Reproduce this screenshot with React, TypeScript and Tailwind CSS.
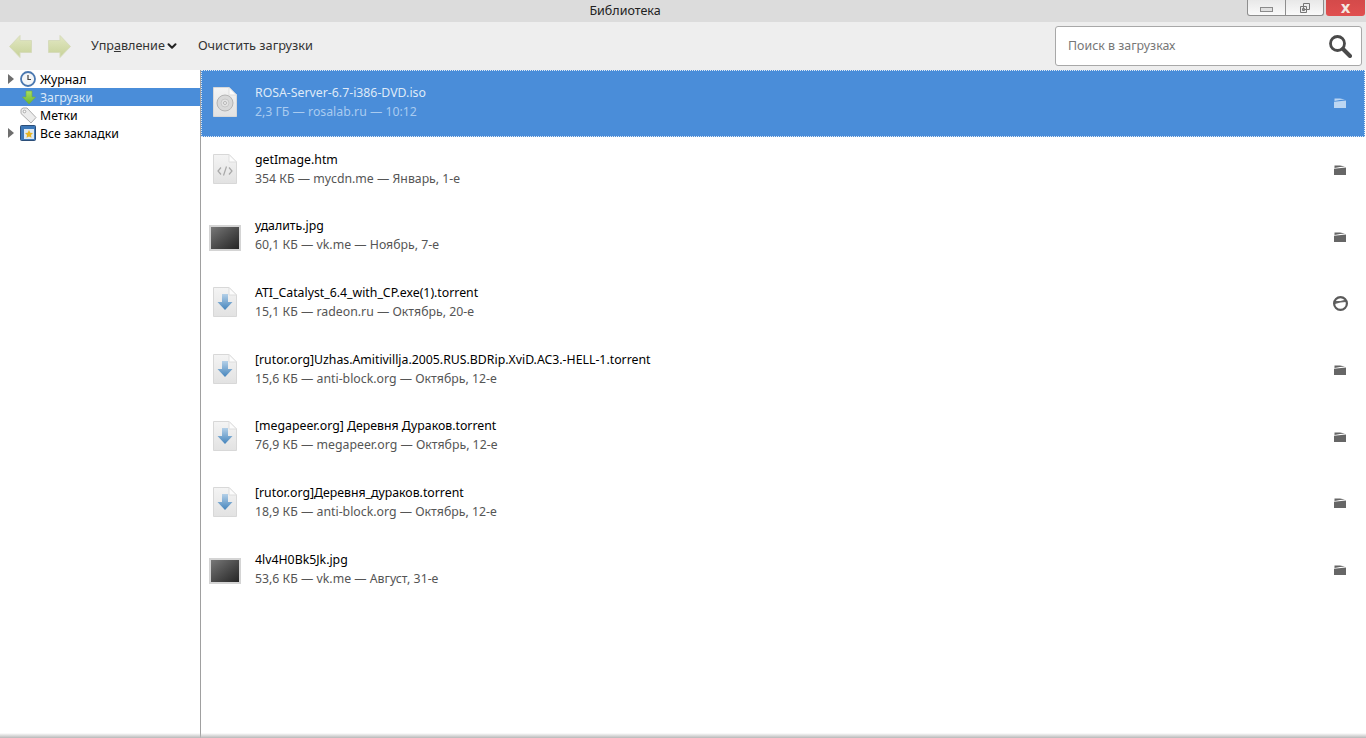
import { ChevronDown } from "lucide-react";

type Kind = "iso" | "html" | "image" | "torrent";

const downloads: { name: string; meta: string; kind: Kind; active?: boolean; round?: boolean }[] = [
  { name: "ROSA-Server-6.7-i386-DVD.iso", meta: "2,3 ГБ — rosalab.ru — 10:12", kind: "iso", active: true },
  { name: "getImage.htm", meta: "354 КБ — mycdn.me — Январь, 1-е", kind: "html" },
  { name: "удалить.jpg", meta: "60,1 КБ — vk.me — Ноябрь, 7-е", kind: "image" },
  { name: "ATI_Catalyst_6.4_with_CP.exe(1).torrent", meta: "15,1 КБ — radeon.ru — Октябрь, 20-е", kind: "torrent", round: true },
  { name: "[rutor.org]Uzhas.Amitivillja.2005.RUS.BDRip.XviD.AC3.-HELL-1.torrent", meta: "15,6 КБ — anti-block.org — Октябрь, 12-е", kind: "torrent" },
  { name: "[megapeer.org] Деревня Дураков.torrent", meta: "76,9 КБ — megapeer.org — Октябрь, 12-е", kind: "torrent" },
  { name: "[rutor.org]Деревня_дураков.torrent", meta: "18,9 КБ — anti-block.org — Октябрь, 12-е", kind: "torrent" },
  { name: "4lv4H0Bk5Jk.jpg", meta: "53,6 КБ — vk.me — Август, 31-е", kind: "image" },
];

function FileIcon({ kind }: { kind: Kind }) {
  if (kind === "image") {
    return (
      <div className="w-8 h-[26px] mt-[2px] border-2 border-[#d4d4d4] bg-gradient-to-br from-[#787878] to-[#262626]" />
    );
  }
  return (
    <svg width="24" height="30" viewBox="0 0 24 30" className="-mt-[2px]">
      <defs>
        <linearGradient id="page" x1="0" y1="0" x2="0" y2="1">
          <stop offset="0" stopColor="#f4f4f4" />
          <stop offset="1" stopColor="#e2e2e2" />
        </linearGradient>
        <linearGradient id="down" x1="0" y1="0" x2="0" y2="1">
          <stop offset="0" stopColor="#b4d0e8" />
          <stop offset="1" stopColor="#4484bc" />
        </linearGradient>
      </defs>
      <path d="M.5 .5H16L23.500 8V29.500H.5Z" fill="url(#page)" stroke="#d8d8d8" />
      <path d="M16 .5V8H23.500Z" fill="#fcfcfc" stroke="#dedede" />
      {kind === "iso" && (
        <g fill="none" stroke="#b4b4b4">
          <circle cx="12" cy="16" r="8" fill="#d8d8d8" />
          <circle cx="12" cy="16" r="4" fill="#e2e2e2" stroke="#c8c8c8" />
          <circle cx="12" cy="16" r="1.500" fill="#f4f4f4" />
        </g>
      )}
      {kind === "html" && (
        <g fill="none" stroke="#a8a8a8" strokeWidth="1.200">
          <path d="M8 13.500 5 17l3 3.500M16 13.500l3 3.500-3 3.500M13.500 12.500 10.500 21.500" />
        </g>
      )}
      {kind === "torrent" && <path d="M9 7h6v8h4.500L12 23 4.500 15H9Z" fill="url(#down)" />}
    </svg>
  );
}

function FolderIcon({ active }: { active?: boolean }) {
  const fill = active ? "#bcd6f2" : "#666666";
  return (
    <svg width="12" height="10" viewBox="0 0 12 10">
      <path d="M.5 .5H6L11 1.500 6 2 .5 3Z" fill={fill} />
      <path d="M0 3.800 12 2.500V10H0Z" fill={fill} />
    </svg>
  );
}

function RoundFolderIcon() {
  return (
    <svg width="15" height="15" viewBox="0 0 15 15">
      <circle cx="7.500" cy="7.500" r="6.400" fill="#fff" />
      <path d="M2 5 7.500 5 13 3.500V6L7.500 6.500 2 8Z" fill="#666" />
      <circle cx="7.500" cy="7.500" r="6.400" fill="none" stroke="#5a5a5a" strokeWidth="2.200" />
    </svg>
  );
}

function Arrow({ flip }: { flip?: boolean }) {
  return (
    <svg width="23" height="23" viewBox="0 0 23 23" className={flip ? "-scale-x-100" : ""}>
      <defs>
        <linearGradient id="arrowFill" x1="0" y1="0" x2="0" y2="1">
          <stop offset="0" stopColor="#e3e8c4" />
          <stop offset="1" stopColor="#c6d197" />
        </linearGradient>
      </defs>
      <path d="M11 .5 .5 11.500 11 22.500V17.500H22.500V5.500H11Z" fill="url(#arrowFill)" stroke="#d6dbbc" />
    </svg>
  );
}

function Triangle() {
  return (
    <svg width="6" height="10" viewBox="0 0 6 10">
      <path d="M0 0 6 5 0 10Z" fill="#6e6e6e" />
    </svg>
  );
}

function SidebarRow({ label, icon, arrow, active }: { label: string; icon: React.ReactNode; arrow?: boolean; active?: boolean }) {
  return (
    <div className={`h-[18px] flex items-center pl-[8px] ${active ? "bg-[#4a8dd9] text-[#d9e8f8]" : "text-black"}`}>
      <div className="w-[12px] shrink-0">{arrow && <Triangle />}</div>
      <div className="w-[20px] shrink-0 flex items-center">{icon}</div>
      <span className="mt-[2px]">{label}</span>
    </div>
  );
}

function App() {
  return (
    <div className="relative w-[1366px] h-[738px] overflow-hidden bg-white text-[12.300px] font-['Noto_Sans',sans-serif] flex flex-col">
      <div className="h-[22px] bg-[#dcdcdc] flex items-center justify-center relative shrink-0 pr-[116px]">
        <span className="text-[#222] text-[12.500px]">Библиотека</span>
        <div className="absolute top-0 left-[1247px] flex h-[16px]">
          <div className="w-[39px] border border-t-0 border-[#8e8e8e] rounded-bl-[3px] bg-gradient-to-b from-[#e8e8e8] to-[#fafafa] flex items-center justify-center">
            <div className="w-[13px] h-[5px] border border-[#8a8a8a] bg-[#e0e0e0] mt-[4px]" />
          </div>
          <div className="w-[38px] border border-t-0 border-l-0 border-[#8e8e8e] rounded-br-[3px] bg-gradient-to-b from-[#e8e8e8] to-[#fafafa] flex items-center justify-center">
            <svg width="10" height="10" viewBox="0 0 10 10" fill="none" stroke="#777">
              <path d="M3.500 .5h6v6h-6zM.5 3.500h6v6h-6z" fill="#eee" />
              <path d="M2.500 5.500h2v2h-2z" />
            </svg>
          </div>
          <div className="ml-[2px] w-[39px] rounded-b-[3px] bg-gradient-to-b from-[#d44a4a] to-[#e05050] flex items-center justify-center text-[#f4e8e0] font-bold text-[15px] leading-[16px]">
            <span className="font-['DejaVu_Sans',sans-serif]">x</span>
          </div>
        </div>
      </div>

      <div className="h-[48px] bg-[#eeeeee] flex items-center shrink-0 text-[#333] text-[12.600px]">
        <div className="ml-[9px] flex items-center gap-[16px]">
          <Arrow />
          <Arrow flip />
        </div>
        <div className="ml-[20px] flex items-center">
          <span>
            Упр<span className="underline">а</span>вление
          </span>
          <ChevronDown size={14} strokeWidth={3.500} className="text-[#222]" />
        </div>
        <span className="ml-[19px] text-[12.750px]">Очистить загрузки</span>
        <div className="ml-auto mr-[4px] w-[307px] h-[40px] border border-[#a8a8a8] rounded-[3px] bg-white flex items-center pl-[12px] pr-[9px] justify-between text-[#777] text-[12.400px]">
          <span>Поиск в загрузках</span>
          <svg width="24" height="24" viewBox="0 0 24 24" fill="none">
            <circle cx="9.500" cy="9.500" r="7" stroke="#4a4a4a" strokeWidth="2.800" />
            <path d="M15 15l7 7" stroke="#4a4a4a" strokeWidth="4" strokeLinecap="round" />
          </svg>
        </div>
      </div>

      <div className="flex flex-1 min-h-0">
        <div className="w-[201px] shrink-0 border-r border-[#a0a0a0]">
          <SidebarRow
            label="Журнал"
            arrow
            icon={
              <svg width="16" height="16" viewBox="0 0 16 16">
                <circle cx="8" cy="8" r="7" fill="#f4f6f8" stroke="#4a78b0" strokeWidth="1.800" />
                <path d="M8 4v4.500h3" fill="none" stroke="#444" strokeWidth="1.200" />
              </svg>
            }
          />
          <SidebarRow
            label="Загрузки"
            active
            icon={
              <svg width="14" height="15" viewBox="0 0 14 15" className="ml-[2px]">
                <defs>
                  <linearGradient id="greenDown" x1="0" y1="0" x2="0" y2="1">
                    <stop offset="0" stopColor="#a8de60" />
                    <stop offset="1" stopColor="#6cb634" />
                  </linearGradient>
                </defs>
                <path d="M4 1h6v6h3.500L7 14 .5 7H4Z" fill="url(#greenDown)" stroke="#72ad3c" strokeWidth=".6" />
              </svg>
            }
          />
          <SidebarRow
            label="Метки"
            icon={
              <svg width="17" height="17" viewBox="0 0 17 17">
                <path d="M1 2.500 3 1h4l9 9.500-5 5.500L1 6.500Z" fill="#ececec" stroke="#adadad" />
                <circle cx="4.500" cy="4.500" r="1.300" fill="#fff" stroke="#999" strokeWidth=".8" />
              </svg>
            }
          />
          <SidebarRow
            label="Все закладки"
            arrow
            icon={
              <svg width="16" height="16" viewBox="0 0 16 16">
                <rect x=".5" y=".5" width="15" height="15" rx="1" fill="#3d78b8" stroke="#2c4e78" />
                <rect x="4" y="4" width="10" height="10" fill="#dce8f2" />
                <path d="M9 5l1.300 2.700 2.700.3-2 2 .5 2.800L9 11.500 6.500 12.800 7 10 5 8l2.700-.3Z" fill="#e6b422" />
              </svg>
            }
          />
        </div>

        <div className="flex-1 min-w-0 pr-[1px]">
          {downloads.map((item) => (
            <div
              key={item.name}
              className={`h-[66.700px] flex items-center ${
                item.active ? "bg-[#4a8dd9] outline outline-1 -outline-offset-1 outline-dotted outline-[#dfe9f5]" : ""
              }`}
            >
              <div className="w-[46px] ml-[8px] shrink-0">
                <div className="w-[32px] flex justify-center">
                  <FileIcon kind={item.kind} />
                </div>
              </div>
              <div className="flex-1 min-w-0 -mt-[3px]">
                <div className={`leading-[19px] ${item.active ? "text-[#dfeaf8]" : "text-black"}`}>{item.name}</div>
                <div className={`leading-[19px] ${item.active ? "text-[#a9cbf0]" : "text-[#555]"}`}>{item.meta}</div>
              </div>
              <div className="w-[50px] shrink-0 flex justify-center">
                {item.round ? <RoundFolderIcon /> : <FolderIcon active={item.active} />}
              </div>
            </div>
          ))}
        </div>
      </div>

      <div className="absolute left-0 right-0 bottom-0 h-[5px] bg-gradient-to-b from-transparent to-[#b8b8b8]" />
    </div>
  );
}

export default App;
